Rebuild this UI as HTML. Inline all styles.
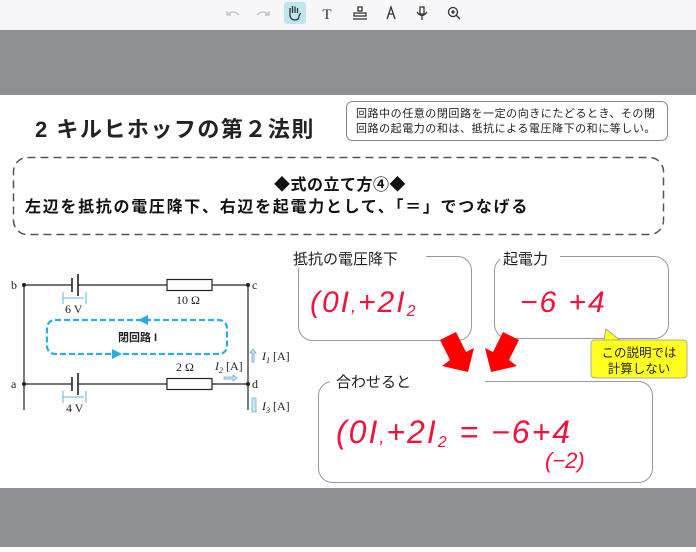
<!DOCTYPE html>
<html><head><meta charset="utf-8"><style>
body{margin:0;width:696px;height:547px;overflow:hidden;background:#fff;font-family:"Liberation Sans","Noto Sans CJK JP",sans-serif}
</style></head><body>
<svg width="696" height="547" xmlns="http://www.w3.org/2000/svg" font-family="Liberation Sans, Noto Sans CJK JP, sans-serif">
<rect width="696" height="30" fill="#f7f7fa"/>
<rect y="30" width="696" height="65" fill="#8e9094"/>
<rect y="488" width="696" height="59" fill="#8e9094"/>
<!-- toolbar icons -->
<g fill="none" stroke="#c4c4c8" stroke-width="1.4"><path d="M227 15 q6 -6 12 0"/><path d="M227 11 v4 h4"/><path d="M269 15 q-6 -6 -12 0"/><path d="M269 11 v4 h-4"/></g>
<rect x="284" y="2" width="22" height="22" rx="3" fill="#bde6f2"/>
<path d="M290 13 v-5 M292.5 13 v-7 M295 13 v-6.5 M297.5 13 v-5 M290 13 v3 q1 4 5 4 q4 0 4 -4 l1.5 -3" fill="none" stroke="#333" stroke-width="1.3"/>
<text x="327" y="19" font-size="15" text-anchor="middle" fill="#333" font-family="Liberation Serif,serif">T</text>
<g fill="none" stroke="#333" stroke-width="1.3"><path d="M358 7 h4 v4 h-4z M354 13 h12 v3 h-12z M353 19 h14"/><path d="M387 19 l4 -12 l4 12 M388 14 h6"/><path d="M420 7 h4 v7 h-4z M417 12 q5 7 10 0 M422 16 v4"/><circle cx="453" cy="12" r="4.5"/><path d="M456 15 l4 4 M451 12 h4 M453 10 v4"/></g>
<!-- title -->
<text x="35" y="137" font-size="22" font-weight="bold" fill="#222" letter-spacing="1.5">2 キルヒホッフの第２法則</text>
<rect x="346.5" y="101.5" width="321" height="39" rx="6" fill="#fff" stroke="#888"/>
<text x="356" y="117" font-size="11" fill="#222" letter-spacing="0.55">回路中の任意の閉回路を一定の向きにたどるとき、その閉</text>
<text x="356" y="132" font-size="11" fill="#222" letter-spacing="0.55">回路の起電力の和は、抵抗による電圧降下の和に等しい。</text>
<rect x="13.5" y="157.5" width="650" height="77" rx="14" fill="none" stroke="#555" stroke-width="1.5" stroke-dasharray="8,5"/>
<text x="340" y="190" font-size="16" font-weight="bold" fill="#111" text-anchor="middle" letter-spacing="0.5">◆式の立て方④◆</text>
<text x="25" y="212" font-size="16" font-weight="bold" fill="#111" letter-spacing="1.7">左辺を抵抗の電圧降下、右辺を起電力として、「＝」でつなげる</text>
<!-- circuit -->
<g stroke="#222" stroke-width="1.2" fill="none">
<path d="M24 285 H72 M78 285 H167 M212 285 H248 M24 285 V410 M248 285 V410 M24 384 H72 M78 384 H167 M212 384 H248"/>
<path d="M72 278 V292 M78 274 V296 M72 377 V391 M78 373 V395" stroke-width="1.6"/>
<rect x="167" y="279.5" width="45" height="11"/><rect x="167" y="378.5" width="45" height="11"/>
</g>
<g fill="#222"><circle cx="24" cy="285" r="2"/><circle cx="248" cy="285" r="2"/><circle cx="24" cy="384" r="2"/><circle cx="248" cy="384" r="2"/></g>
<g font-family="Liberation Serif,serif" font-size="12" fill="#222">
<text x="11" y="289">b</text><text x="252" y="289">c</text><text x="11" y="388">a</text><text x="252" y="388">d</text>
<text x="65" y="313">6 V</text><text x="176" y="304">10 Ω</text><text x="66" y="412">4 V</text><text x="176" y="371">2 Ω</text>
<text x="215" y="370" font-style="italic">I<tspan font-size="8" dy="3">2</tspan><tspan dy="-3" font-style="normal"> [A]</tspan></text>
<text x="262" y="360" font-style="italic">I<tspan font-size="8" dy="3">1</tspan><tspan dy="-3" font-style="normal"> [A]</tspan></text>
<text x="262" y="410" font-style="italic">I<tspan font-size="8" dy="3">3</tspan><tspan dy="-3" font-style="normal"> [A]</tspan></text>
</g>
<g stroke="#5ab8e0" stroke-width="1" fill="none"><path d="M63 292 V304 M86 292 V304 M63 298 H84 M63 391 V403 M86 391 V403 M63 397 H84"/></g>
<rect x="47" y="320" width="180" height="34" rx="8" fill="none" stroke="#28aee0" stroke-width="2.2" stroke-dasharray="6,3"/>
<path d="M148 315 l-10 5 l10 5z M112 349 l10 5 l-10 5z" fill="#28aee0"/>
<text x="118" y="341" font-size="11" font-weight="bold" fill="#222">閉回路 I</text>
<path d="M252 362 V353 h-2 l3 -4 l3 4 h-2 v9z M252 398 h4 v14 h-4z M224 377 h9 v-2 l4 3 l-4 3 v-2 h-9z" fill="#cde8f5" stroke="#6aaed0" stroke-width="0.8"/>
<!-- boxes -->
<rect x="298.5" y="256.5" width="173" height="84" rx="14" fill="none" stroke="#999"/>
<rect x="288" y="248" width="138" height="20" fill="#fff"/>
<text x="293" y="264" font-size="15" fill="#222">抵抗の電圧降下</text>
<rect x="494.5" y="256.5" width="174" height="82" rx="14" fill="none" stroke="#999"/>
<rect x="500" y="248" width="60" height="20" fill="#fff"/>
<text x="503" y="264" font-size="15" fill="#222">起電力</text>
<rect x="318.5" y="381.5" width="334" height="101" rx="14" fill="none" stroke="#999"/>
<rect x="330" y="371" width="155" height="20" fill="#fff"/>
<text x="336" y="387" font-size="15" fill="#222">合わせると</text>
<!-- handwriting -->
<g fill="#f0143c" font-family="Liberation Sans, sans-serif">
<text x="310" y="312" font-size="30" font-style="italic" letter-spacing="2">(0I<tspan font-size="18">,</tspan>+2I<tspan font-size="16" dy="4">2</tspan></text>
<text x="520" y="312" font-size="30" font-style="italic" letter-spacing="2">−6 +4</text>
<text x="336" y="443" font-size="32" font-style="italic" letter-spacing="2">(0I<tspan font-size="18">,</tspan>+2I<tspan font-size="16" dy="4">2</tspan><tspan dy="-4"> = −6+4</tspan></text>
<text x="545" y="468" font-size="22" font-style="italic">(−2)</text>
</g>
<!-- red arrows -->
<path d="M440 340 L456 332 L466 352 L474 348 L468 372 L442 366 L450 360z" fill="#f00"/>
<path d="M519 340 L503 332 L493 352 L485 348 L491 372 L517 366 L509 360z" fill="#f00"/>
<!-- callout -->
<path d="M595 340 H683 q4 0 4 4 V374 q0 4 -4 4 H595 q-4 0 -4 -4 V344 q0 -4 4 -4 H604 L606 329 L620 340z" fill="#ffff20" stroke="#999" stroke-width="0.8"/>
<text x="639" y="357" font-size="12.5" fill="#222" text-anchor="middle">この説明では</text>
<text x="639" y="373" font-size="12.5" fill="#222" text-anchor="middle">計算しない</text>
</svg>
</body></html>
